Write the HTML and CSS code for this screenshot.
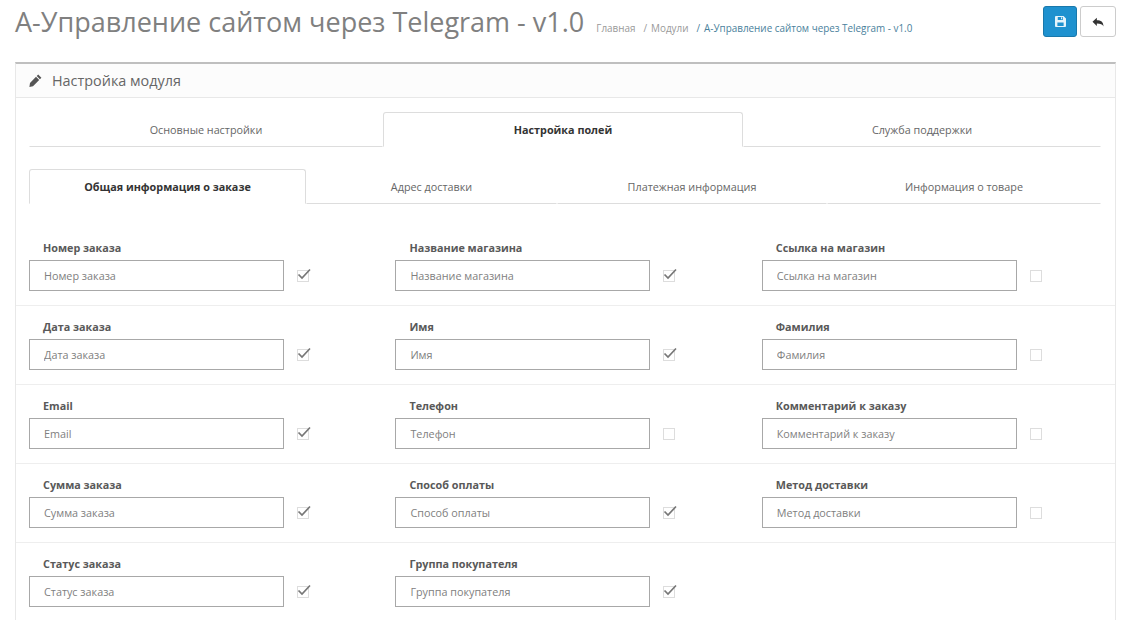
FILE: index.html
```html
<!DOCTYPE html>
<html lang="ru">
<head>
    <meta charset="UTF-8">
    <title>А-Управление сайтом через Telegram - v1.0</title>
    <link rel="stylesheet" href="styles.css">
</head>
<body>
    <!-- Page header -->
    <div class="page-header">
        <h1>А-Управление сайтом через Telegram - v1.0</h1>
        <ul class="breadcrumb">
            <li>Главная</li>
            <li>Модули</li>
            <li class="current">А-Управление сайтом через Telegram - v1.0</li>
        </ul>
        <div class="actions">
            <button class="btn btn-primary" type="button" title="Сохранить">
                <svg width="11" height="11" viewBox="0 0 12 12"><path fill="#e4f3fb" fill-rule="evenodd" d="M1 0h8.300L12 2.700V11a1 1 0 0 1-1 1H1a1 1 0 0 1-1-1V1a1 1 0 0 1 1-1zM3 1v3.400h5.600V1zM2.600 7v3.800h6.800V7z"/><path fill="#e4f3fb" d="M6.600 1.400h1.200v2.200H6.600z"/></svg>
            </button>
            <button class="btn btn-default" type="button" title="Отмена">
                <svg width="12" height="10" viewBox="0 0 14 12"><path fill="#333" d="M5.600.8v3C10.400 3.800 13.600 5.400 13.600 11.400 12.400 8.800 10 7.900 5.600 7.900v3L.4 5.800z"/></svg>
            </button>
        </div>
    </div>

    <div class="panel">
        <div class="panel-heading">
            <svg width="13" height="13" viewBox="0 0 13 13"><path fill="#555" d="M9.200.6l3.200 3.200-1.500 1.500-3.200-3.200zM7 2.800l3.200 3.200-6.200 6.200L.4 13l.6-3.900z"/></svg>
            <span>Настройка модуля</span>
        </div>
        <div class="panel-body">
            <ul class="tabs tabs-main">
                <li>Основные настройки</li>
                <li class="active">Настройка полей</li>
                <li>Служба поддержки</li>
            </ul>
            <ul class="tabs tabs-sub">
                <li class="active">Общая информация о заказе</li>
                <li>Адрес доставки</li>
                <li>Платежная информация</li>
                <li>Информация о товаре</li>
            </ul>

            <div class="form-row">
                <div class="field">
                    <label>Номер заказа</label>
                    <div class="control"><input type="text" placeholder="Номер заказа"><span class="check"><svg viewBox="0 0 14 12"><path d="M1.500 6.500l3.500 3.500L13 1.500" /></svg></span></div>
                </div>
                <div class="field">
                    <label>Название магазина</label>
                    <div class="control"><input type="text" placeholder="Название магазина"><span class="check"><svg viewBox="0 0 14 12"><path d="M1.500 6.500l3.500 3.500L13 1.500" /></svg></span></div>
                </div>
                <div class="field">
                    <label>Ссылка на магазин</label>
                    <div class="control"><input type="text" placeholder="Ссылка на магазин"><span class="check"></span></div>
                </div>
            </div>

            <div class="form-row">
                <div class="field">
                    <label>Дата заказа</label>
                    <div class="control"><input type="text" placeholder="Дата заказа"><span class="check"><svg viewBox="0 0 14 12"><path d="M1.500 6.500l3.500 3.500L13 1.500" /></svg></span></div>
                </div>
                <div class="field">
                    <label>Имя</label>
                    <div class="control"><input type="text" placeholder="Имя"><span class="check"><svg viewBox="0 0 14 12"><path d="M1.500 6.500l3.500 3.500L13 1.500" /></svg></span></div>
                </div>
                <div class="field">
                    <label>Фамилия</label>
                    <div class="control"><input type="text" placeholder="Фамилия"><span class="check"></span></div>
                </div>
            </div>

            <div class="form-row">
                <div class="field">
                    <label>Email</label>
                    <div class="control"><input type="text" placeholder="Email"><span class="check"><svg viewBox="0 0 14 12"><path d="M1.500 6.500l3.500 3.500L13 1.500" /></svg></span></div>
                </div>
                <div class="field">
                    <label>Телефон</label>
                    <div class="control"><input type="text" placeholder="Телефон"><span class="check"></span></div>
                </div>
                <div class="field">
                    <label>Комментарий к заказу</label>
                    <div class="control"><input type="text" placeholder="Комментарий к заказу"><span class="check"></span></div>
                </div>
            </div>

            <div class="form-row">
                <div class="field">
                    <label>Сумма заказа</label>
                    <div class="control"><input type="text" placeholder="Сумма заказа"><span class="check"><svg viewBox="0 0 14 12"><path d="M1.500 6.500l3.500 3.500L13 1.500" /></svg></span></div>
                </div>
                <div class="field">
                    <label>Способ оплаты</label>
                    <div class="control"><input type="text" placeholder="Способ оплаты"><span class="check"><svg viewBox="0 0 14 12"><path d="M1.500 6.500l3.500 3.500L13 1.500" /></svg></span></div>
                </div>
                <div class="field">
                    <label>Метод доставки</label>
                    <div class="control"><input type="text" placeholder="Метод доставки"><span class="check"></span></div>
                </div>
            </div>

            <div class="form-row">
                <div class="field">
                    <label>Статус заказа</label>
                    <div class="control"><input type="text" placeholder="Статус заказа"><span class="check"><svg viewBox="0 0 14 12"><path d="M1.500 6.500l3.500 3.500L13 1.500" /></svg></span></div>
                </div>
                <div class="field">
                    <label>Группа покупателя</label>
                    <div class="control"><input type="text" placeholder="Группа покупателя"><span class="check"><svg viewBox="0 0 14 12"><path d="M1.500 6.500l3.500 3.500L13 1.500" /></svg></span></div>
                </div>
            </div>
        </div>
    </div>
</body>
</html>
```

FILE: styles.css
```css
/* Reset */
html, body {
    margin: 0;
    padding: 0;
    height: 620px;
    overflow: hidden;
    background-color: #fff;
    font-family: "Open Sans", sans-serif;
    font-size: 12px;
    color: #666;
}

ul {
    list-style: none;
    margin: 0;
    padding: 0;
}

/* Page header */
.page-header {
    display: flex;
    align-items: baseline;
    height: 62px;
    padding: 0 6px 19px 15px;
    box-sizing: border-box;
}

.page-header h1 {
    margin: 0;
    font-size: 27px;
    line-height: 44px;
    font-weight: 400;
    color: #808080;
    white-space: nowrap;
}

.breadcrumb {
    display: flex;
    margin-left: 12px;
    font-size: 9.900px;
    color: #999;
    white-space: nowrap;
}

.breadcrumb li + li::before {
    content: "/";
    padding: 0 4px 0 8px;
}

.breadcrumb .current {
    color: #4a7f9c;
}

.actions {
    display: flex;
    gap: 3px;
    margin-left: auto;
    align-self: center;
}

.btn {
    display: flex;
    align-items: center;
    justify-content: center;
    height: 31px;
    padding: 0;
    border-radius: 3px;
    cursor: pointer;
}

.btn-primary {
    width: 34px;
    background-color: #1e91cf;
    border: 1px solid #1978ab;
}

.btn-default {
    width: 36px;
    background-color: #fff;
    border: 1px solid #ccc;
}

/* Panel */
.panel {
    margin: 0 6px 0 15px;
    border: 1px solid #e8e8e8;
    border-top: 2px solid #bfbfbf;
}

.panel-heading {
    display: flex;
    align-items: center;
    gap: 10px;
    height: 33px;
    padding-left: 13px;
    background-color: #fcfcfc;
    border-bottom: 1px solid #e8e8e8;
    font-size: 14.400px;
    color: #666;
}

.panel-body {
    padding-top: 14px;
}

/* Tabs */
.tabs {
    display: flex;
    margin: 0 14px 0 13px;
    text-align: center;
}

.tabs li {
    box-sizing: border-box;
    height: 35px;
    line-height: 33px;
    font-size: 10.800px;
    border: 1px solid transparent;
    border-bottom-color: #ddd;
    color: #666;
}

.tabs .active {
    background-color: #fff;
    border-color: #ddd;
    border-bottom-color: #fff;
    border-radius: 3px 3px 0 0;
    font-weight: 700;
    color: #333;
}

.tabs-main li:nth-child(1) { width: 354px; }
.tabs-main li:nth-child(2) { width: 360px; }
.tabs-main li:nth-child(3) { width: 358px; }

.tabs-sub {
    margin-top: 22px;
    margin-bottom: 23px;
}

.tabs-sub li:nth-child(1) { width: 277px; }
.tabs-sub li:nth-child(2) { width: 251px; }
.tabs-sub li:nth-child(3) { width: 270px; }
.tabs-sub li:nth-child(4) { width: 274px; }

/* Form rows */
.form-row {
    display: grid;
    grid-template-columns: repeat(3, 366.400px);
    box-sizing: border-box;
    height: 79px;
    padding: 11px 0 0 13px;
    border-bottom: 1px solid #eee;
}

.form-row:last-child {
    border-bottom: none;
}

.field label {
    display: block;
    height: 22px;
    line-height: 20px;
    padding-left: 14px;
    font-size: 10.800px;
    font-weight: 700;
    color: #595959;
}

.control {
    display: flex;
    align-items: center;
}

.control input {
    box-sizing: border-box;
    width: 255px;
    height: 31px;
    padding: 0 14px;
    border: 1px solid #a8a8a8;
    border-radius: 0;
    font-family: "Open Sans", sans-serif;
    font-size: 10.800px;
    color: #666;
}

.control input::placeholder {
    color: #808080;
    opacity: 1;
}

.check {
    position: relative;
    box-sizing: border-box;
    width: 12px;
    height: 12px;
    margin-left: 13px;
    border: 1px solid #ddd;
}

.check svg {
    position: absolute;
    left: -1px;
    top: -3px;
    width: 14px;
    height: 12px;
    fill: none;
    stroke: #777;
    stroke-width: 1.700;
}
```
